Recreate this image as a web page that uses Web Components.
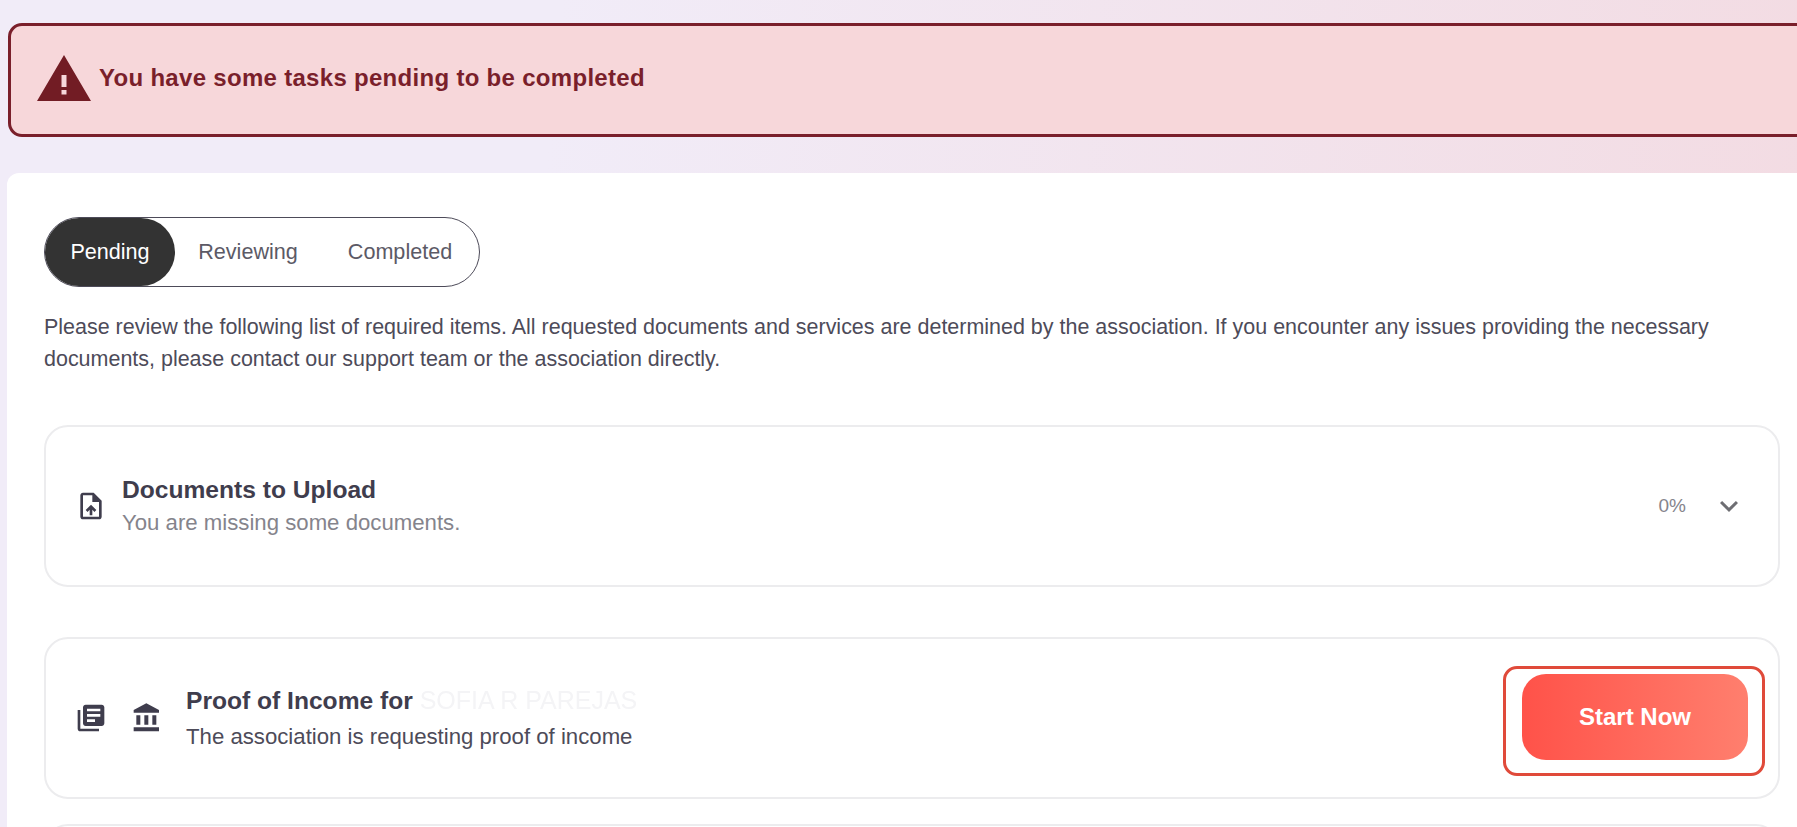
<!DOCTYPE html>
<html>
<head>
<meta charset="utf-8">
<title>Tasks</title>
<style>
  html, body { margin: 0; height: 100%; overflow: hidden; }
  body {
    font-family: "Liberation Sans", Arial, sans-serif;
    background: linear-gradient(95deg, #f1ecf8 0%, #f1ecf8 30%, #f3dbe2 100%);
  }
  .page { width: 1830px; padding: 23px 0 0 7px; box-sizing: border-box; }
</style>
</head>
<body>
<div class="page">
  <task-alert>You have some tasks pending to be completed</task-alert>
  <task-panel>
    <task-tabs></task-tabs>
    <p slot="intro">Please review the following list of required items. All requested documents and services are determined by the association. If you encounter any issues providing the necessary documents, please contact our support team or the association directly.</p>
    <task-card spaced>
      <task-icon name="upload" slot="icons"></task-icon>
      <span slot="title">Documents to Upload</span>
      <span slot="sub">You are missing some documents.</span>
      <task-progress slot="end"></task-progress>
    </task-card>
    <task-card wide>
      <task-icon name="books" slot="icons"></task-icon>
      <task-icon name="bank" slot="icons"></task-icon>
      <span slot="title">Proof of Income for <task-hidden>SOFIA R PAREJAS</task-hidden></span>
      <span slot="sub">The association is requesting proof of income</span>
      <start-button slot="end">Start Now</start-button>
    </task-card>
    <task-card></task-card>
  </task-panel>
</div>

<script>
const ICONS = {
  upload: "M14 2H6c-1.1 0-1.99.9-1.99 2L4 20c0 1.1.89 2 1.99 2H18c1.1 0 2-.9 2-2V8l-6-6zm4 18H6V4h7v5h5v11zM8 15.01l1.41 1.41L11 14.84V19h2v-4.16l1.59 1.59L16 15.01 12.01 11 8 15.01z",
  books: "M4 6H2v14c0 1.1.9 2 2 2h14v-2H4V6zm16-4H8c-1.1 0-2 .9-2 2v12c0 1.1.9 2 2 2h12c1.1 0 2-.9 2-2V4c0-1.1-.9-2-2-2zm-1 9H9V9h10v2zm-4 4H9v-2h6v2zm4-8H9V5h10v2z",
  bank: "M4 10v7h3v-7H4zm6 0v7h3v-7h-3zM2 22h19v-3H2v3zm14-12v7h3v-7h-3zm-4.5-9L2 6v2h19V6l-9.5-5z",
};

class TaskIcon extends HTMLElement {
  constructor() {
    super();
    this.attachShadow({ mode: "open" });
  }
  connectedCallback() {
    this.shadowRoot.innerHTML = `
    <style>
      :host { display: block; width: 32px; height: 32px; color: #3f3d4d; }
      svg { display: block; width: 100%; height: 100%; fill: currentColor; }
    </style>
    <svg viewBox="0 0 24 24"><path d="${ICONS[this.getAttribute("name")]}"/></svg>`;
  }
}

class TaskAlert extends HTMLElement {
  constructor() {
    super();
    this.attachShadow({ mode: "open" }).innerHTML = `
    <style>
      :host {
        display: flex;
        align-items: center;
        gap: 8px;
        box-sizing: border-box;
        height: 114px;
        margin-left: 1px;
        padding: 0 0 4px 26px;
        background: #f7d7da;
        border: 3px solid #7a1f2b;
        border-radius: 14px;
        color: #7a1f2b;
        font: bold 24px "Liberation Sans", Arial, sans-serif;
        letter-spacing: .3px;
      }
      svg { width: 54px; height: 46px; fill: #721c24; flex: none; }
    </style>
    <svg viewBox="0 0 54 46">
      <path fill-rule="evenodd" d="M27 0 L54 46 H0 Z M24.5 20 V32 H29.5 V20 Z M24.5 35 V39.5 H29.5 V35 Z"/>
    </svg>
    <slot></slot>`;
  }
}

class TaskPanel extends HTMLElement {
  constructor() {
    super();
    this.attachShadow({ mode: "open" }).innerHTML = `
    <style>
      :host {
        display: block;
        box-sizing: border-box;
        margin-top: 36px;
        padding: 44px 37px 0;
        background: #fff;
        border-radius: 12px 0 0 0;
        height: 655px;
        overflow: hidden;
      }
      ::slotted(p) {
        margin: 24px 0 0;
        width: 1680px;
        font-size: 21.47px;
        line-height: 32px;
        color: #4d4b59;
      }
      .cards { display: flex; flex-direction: column; gap: 25px; margin-top: 50px; }
    </style>
    <slot name="tabs"></slot>
    <slot name="intro"></slot>
    <div class="cards"><slot></slot></div>`;
  }
}

class TaskTabs extends HTMLElement {
  constructor() {
    super();
    this.attachShadow({ mode: "open" }).innerHTML = `
    <style>
      :host {
        display: inline-flex;
        box-sizing: border-box;
        width: 436px;
        height: 70px;
        align-items: stretch;
        border: 1px solid #4d4b59;
        border-radius: 35px;
        font-size: 21.6px;
        color: #5c5a66;
        background: #fff;
      }
      div { display: flex; align-items: center; justify-content: center; }
      .on { width: 130px; background: #333; color: #fff; border-radius: 35px; }
      .mid { width: 146px; }
      .end { flex: 1; }
    </style>
    <div class="on">Pending</div>
    <div class="mid">Reviewing</div>
    <div class="end">Completed</div>`;
  }
  connectedCallback() { this.setAttribute("slot", "tabs"); }
}

class TaskCard extends HTMLElement {
  constructor() {
    super();
    this.attachShadow({ mode: "open" }).innerHTML = `
    <style>
      :host {
        display: flex;
        flex: none;
        align-items: center;
        box-sizing: border-box;
        width: 1736px;
        height: 162px;
        padding: 0 13px 0 29px;
        border: 2px solid #ececee;
        border-radius: 24px;
        background: #fff;
      }
      :host([spaced]) { margin-bottom: 25px; }
      .icons { display: flex; gap: 24px; }
      .text { flex: 1; margin-left: 15px; padding-bottom: 2px; }
      .title { font-size: 24.6px; font-weight: 700; color: #3f3d4d; line-height: 30px; }
      .sub { font-size: 22.2px; color: #85848c; line-height: 26px; margin-top: 5px; }
      :host([wide]) .text { margin-left: 23px; }
      :host([wide]) .sub { color: #4d4b59; margin-top: 8px; }
    </style>
    <div class="icons"><slot name="icons"></slot></div>
    <div class="text">
      <div class="title"><slot name="title"></slot></div>
      <div class="sub"><slot name="sub"></slot></div>
    </div>
    <slot name="end"></slot>`;
  }
}

class TaskProgress extends HTMLElement {
  constructor() {
    super();
    this.attachShadow({ mode: "open" }).innerHTML = `
    <style>
      :host { display: flex; align-items: center; gap: 25px; margin-right: 18px; font-size: 19px; color: #85848c; }
      svg { width: 36px; height: 36px; fill: #6e6e73; }
    </style>
    <span>0%</span>
    <svg viewBox="0 0 24 24"><path d="M7.41 8.59 12 13.17l4.59-4.58L18 10l-6 6-6-6z"/></svg>`;
  }
}

class TaskHidden extends HTMLElement {
  constructor() {
    super();
    this.attachShadow({ mode: "open" }).innerHTML = `
    <style>
      :host { color: #f4f4f6; font-weight: 400; font-size: 25px; filter: blur(.4px); }
    </style>
    <slot></slot>`;
  }
}

class StartButton extends HTMLElement {
  constructor() {
    super();
    this.attachShadow({ mode: "open" }).innerHTML = `
    <style>
      :host {
        display: block;
        margin-top: 6px;
        padding: 5px 14px 13px 16px;
        border: 3px solid #e04a3a;
        border-radius: 14px;
      }
      button {
        display: block;
        width: 226px;
        height: 86px;
        padding: 0;
        border: 0;
        border-radius: 24px;
        background: linear-gradient(90deg, #ff5249, #ff7f6e);
        color: #fff;
        font: 700 24px "Liberation Sans", Arial, sans-serif;
      }
    </style>
    <button><slot></slot></button>`;
  }
}

customElements.define("task-icon", TaskIcon);
customElements.define("task-alert", TaskAlert);
customElements.define("task-panel", TaskPanel);
customElements.define("task-tabs", TaskTabs);
customElements.define("task-card", TaskCard);
customElements.define("task-progress", TaskProgress);
customElements.define("task-hidden", TaskHidden);
customElements.define("start-button", StartButton);
</script>
</body>
</html>
